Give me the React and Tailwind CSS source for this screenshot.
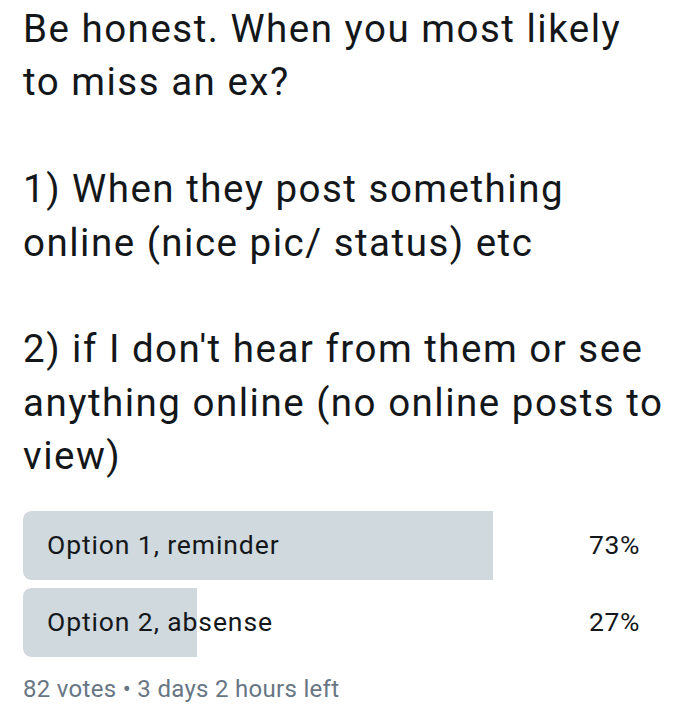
import React from 'react';

const options = [
    {label: 'Option 1, reminder', pct: 73},
    {label: 'Option 2, absense', pct: 27}
]

const PollRow = ({label, pct}) => {
    return (
        <div className="relative h-[69px] flex items-center justify-between rounded-l-lg overflow-hidden">
            {/* fill bar, width comes from data */}
            <div className="absolute left-0 top-0 bottom-0 bg-[#cfd9de] rounded-l-lg" style={{width: pct + '%'}} />
            <span className="relative pl-6 text-[26.5px] tracking-[0.9px] text-[#14171a]">{label}</span>
            <span className="relative pr-[27px] text-[26.5px] tracking-[0.6px] text-[#14171a]">{pct}%</span>
        </div>
    )
}

export default function App() {
    return (
        <div className="w-[690px] h-[723px] bg-white px-[23px] pt-[2px] font-['Roboto',sans-serif] overflow-hidden">
            <div className="text-[38.5px] leading-[53.4px] tracking-[1.5px] text-[#14171a] whitespace-nowrap">
                <p>Be honest. When you most likely<br />to miss an ex?</p>
                <p className="mt-[53.4px]">1) When they post something<br />online (nice pic/ status) etc</p>
                <p className="mt-[53.4px]">2) if I don't hear from them or see<br />anything online (no online posts to<br />view)</p>
            </div>
            <div className="mt-[28px] w-[644px] flex flex-col gap-2">
                {options.map((o, i) => (
                    <PollRow key={i} label={o.label} pct={o.pct} />
                ))}
            </div>
            <div className="mt-[14px] text-[24px] tracking-[0.3px] text-[#687684]">82 votes • 3 days 2 hours left</div>
        </div>
    )
}
